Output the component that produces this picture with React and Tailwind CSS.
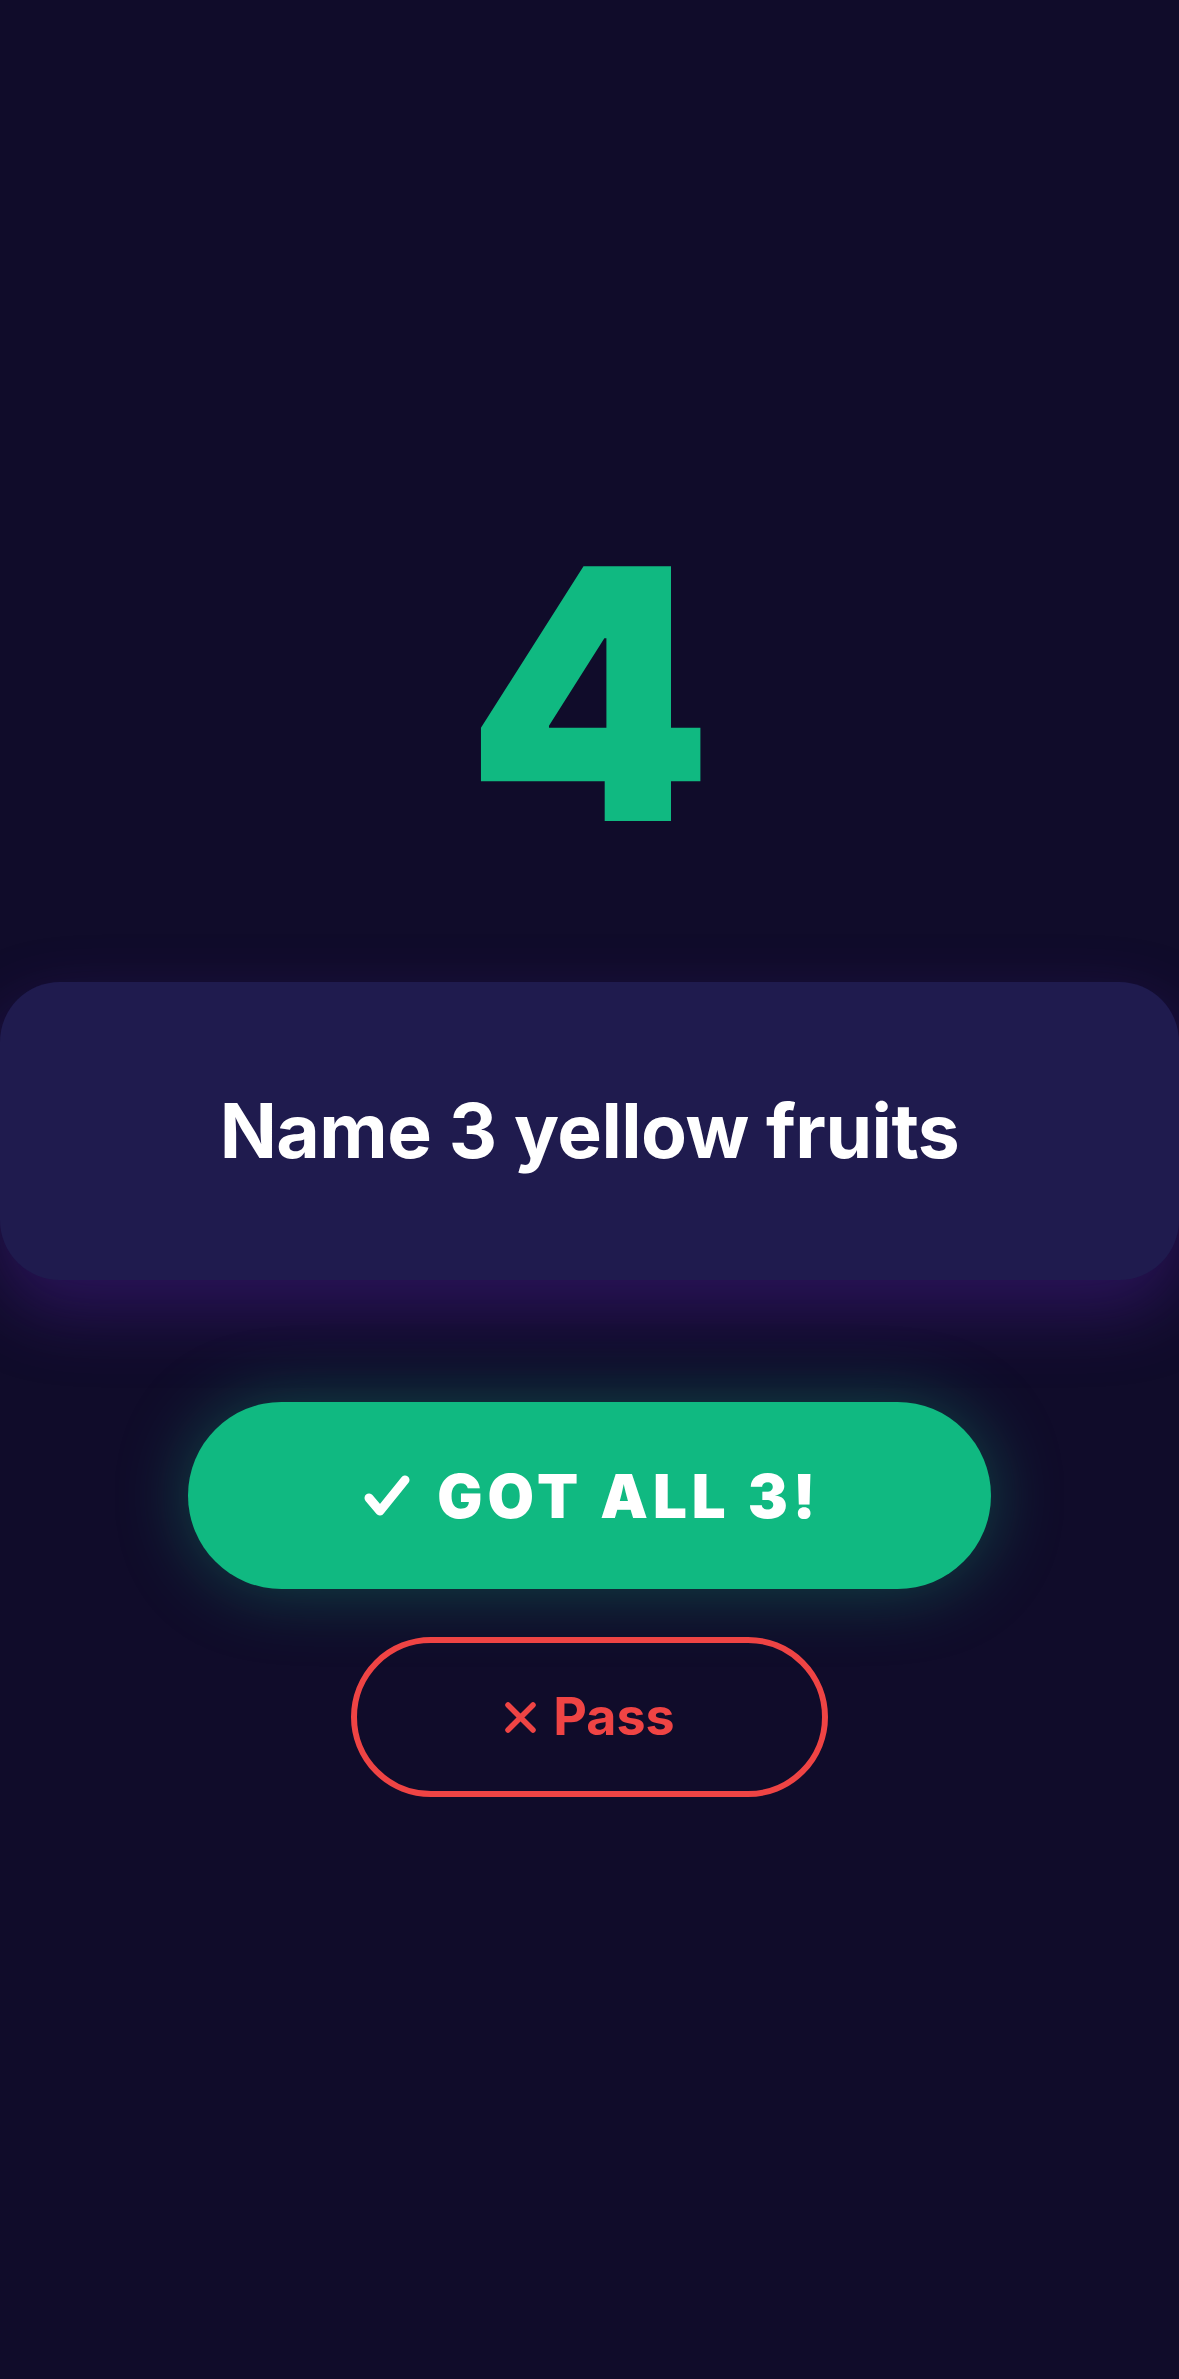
export default function App() {
  return (
    <main
      className="min-h-[2379px] w-full bg-[#100c2a] flex flex-col items-center pt-[519px] overflow-hidden"
      style={{ fontFamily: "Inter, 'Noto Sans', sans-serif" }}
    >
      {/* countdown */}
      <div className="text-[350px] leading-none font-black text-[#10b981]">4</div>

      {/* prompt card */}
      <section className="mt-[113px] w-full h-[298px] rounded-[60px] bg-[#1f1b4e] flex items-center justify-center shadow-[0_30px_70px_rgba(76,29,149,0.45)]">
        <h1 className="text-[75px] font-bold text-white tracking-[-0.5px]">Name 3 yellow fruits</h1>
      </section>

      {/* actions */}
      <button className="mt-[122px] w-[803px] h-[187px] rounded-full bg-[#10b981] text-white flex items-center justify-center gap-[26px] shadow-[0_0_70px_rgba(16,185,129,0.35)]">
        <svg width="48" height="43" viewBox="0 0 48 43" fill="none">
          <polyline points="6,24 17,37 42,6" stroke="white" strokeWidth="9" strokeLinecap="round" strokeLinejoin="round" />
        </svg>
        <span className="text-[60px] font-black tracking-[5px] mr-[-5px]">GOT ALL 3!</span>
      </button>

      <button className="mt-[48px] w-[477px] h-[160px] rounded-full border-[6px] border-[#ef4444] text-[#ef4444] flex items-center justify-center gap-[16px]">
        <svg width="33" height="33" viewBox="0 0 33 33" fill="none">
          <path d="M4 4 L29 29 M29 4 L4 29" stroke="#ef4444" strokeWidth="5.5" strokeLinecap="round" />
        </svg>
        <span className="text-[52px] font-bold">Pass</span>
      </button>
    </main>
  );
}
